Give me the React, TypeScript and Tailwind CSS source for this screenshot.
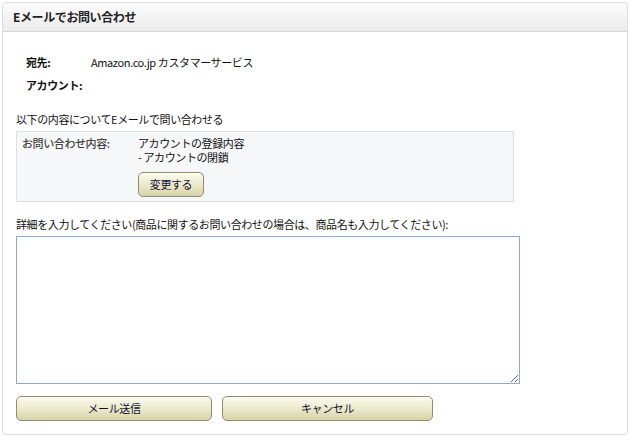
import React from "react";

const font = { fontFamily: '"Noto Sans CJK JP", "Liberation Sans", sans-serif' };

function Btn({ children, className }: { children: React.ReactNode; className: string }) {
  return (
    <button
      className={
        "h-[25px] rounded-[5px] border border-[#8f8d6e] bg-gradient-to-b from-[#fbfbf0] via-[#eceacb] to-[#d6d4a8] text-[11px] text-[#111133] shadow-[inset_0_1px_0_#ffffff] " +
        className
      }
    >
      {children}
    </button>
  );
}

export default function App() {
  return (
    <div className="w-[630px] h-[436px] bg-white pt-[2px] pl-[2px]" style={font}>
      <div className="w-[626px] h-[433px] rounded-[4px] border border-[#dcdcdc] bg-white">
        <div className="h-[29px] rounded-t-[4px] border-b border-[#d8d8d8] bg-gradient-to-b from-[#fcfcfc] to-[#ebebeb] pl-[10px] flex items-center text-[12px] font-bold text-[#222] tracking-[-0.4px]">
          Eメールでお問い合わせ
        </div>
        <div className="pl-[13px] pt-[20px] text-[11px] text-[#111] tracking-[-0.4px]">
          <div className="flex h-[20px] items-center">
            <span className="ml-[10px] w-[65px] font-bold">宛先:</span>
            <span>Amazon.co.jp カスタマーサービス</span>
          </div>
          <div className="mt-[3px] flex h-[20px] items-center">
            <span className="ml-[10px] font-bold">アカウント:</span>
          </div>
          <div className="mt-[16px] h-[16px] leading-[16px]">以下の内容についてEメールで問い合わせる</div>
          <div className="mt-[4px] w-[498px] h-[71px] border border-[#dedede] bg-[#f6f7f9] pl-[5px] pt-[4px] flex">
            <div className="w-[116px] leading-[14px] font-medium text-[#444]">お問い合わせ内容:</div>
            <div>
              <div className="leading-[14px]">
                アカウントの登録内容
                <br />
                - アカウントの閉鎖
              </div>
              <Btn className="mt-[8px] w-[66px] h-[24px]">変更する</Btn>
            </div>
          </div>
          <div className="mt-[14px] h-[16px] leading-[16px]">
            詳細を入力してください(商品に関するお問い合わせの場合は、商品名も入力してください):
          </div>
          <textarea className="mt-[4px] block w-[504px] h-[148px] border border-[#8fa9cf] bg-white outline-none" />
          <div className="mt-[12px] flex gap-[10px]">
            <Btn className="w-[196px]">メール送信</Btn>
            <Btn className="w-[211px]">キャンセル</Btn>
          </div>
        </div>
      </div>
    </div>
  );
}
